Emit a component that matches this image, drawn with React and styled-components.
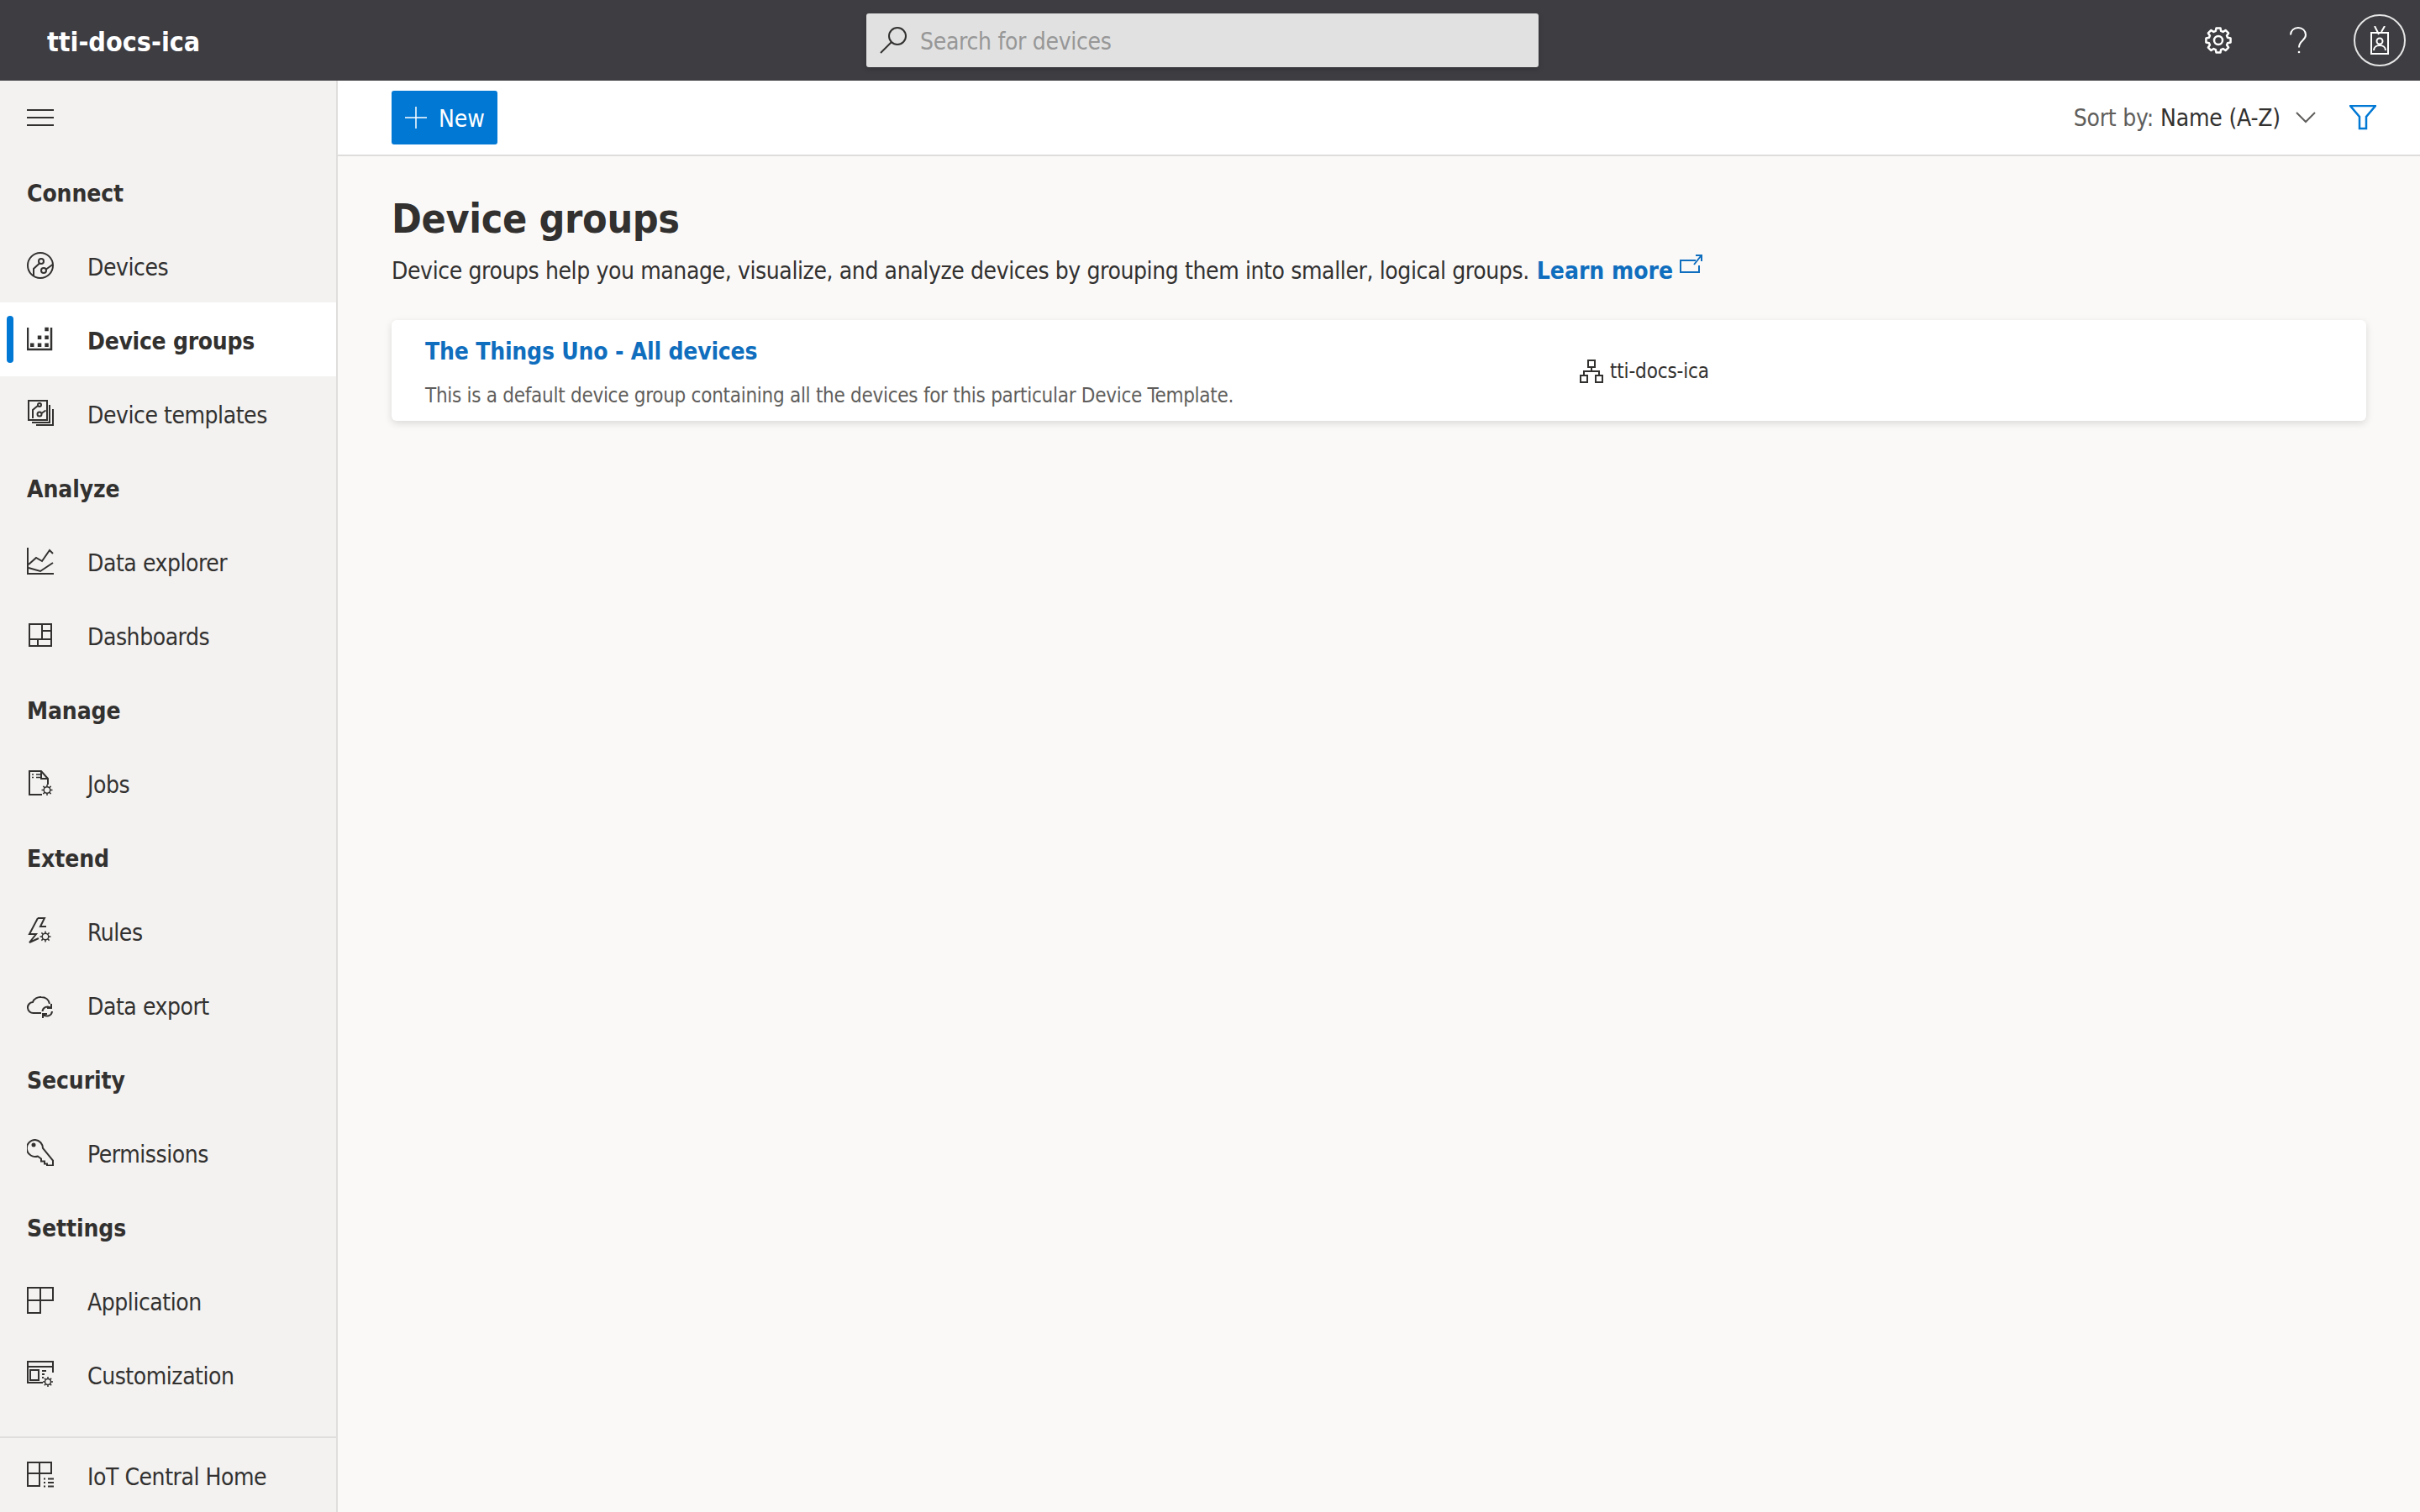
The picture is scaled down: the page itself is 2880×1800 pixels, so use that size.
import React from "react";
import styled, { createGlobalStyle } from "styled-components";

const Global = createGlobalStyle`
  html, body { margin: 0; padding: 0; background: #faf9f8; }
  * { box-sizing: border-box; }
  body { font-family: "DejaVu Sans", "Noto Sans", sans-serif; font-stretch: condensed; color: #323130; }
`;

const Page = styled.div`
  width: 2880px;
  height: 1800px;
  display: grid;
  grid-template-rows: 96px 1fr;
  overflow: hidden;
`;
const Header = styled.header`
  background: #3e3d42;
  display: grid;
  grid-template-columns: 1031px 800px 1fr;
  align-items: center;
`;
const Brand = styled.div`
  padding: 4px 0 0 56px;
  color: #fff;
  font-size: 32px;
  font-weight: 700;
`;
const Search = styled.div`
  height: 64px;
  background: #e1e1e1;
  border-radius: 3px;
  display: flex;
  align-items: center;
  padding-left: 16px;
  gap: 15px;
  font-size: 28px;
  letter-spacing: -0.3px;
  color: #979797;
  box-shadow: 0 2px 6px rgba(0,0,0,.2);
`;
const SearchText = styled.span`
  padding-top: 3px;
`;
const Tools = styled.div`
  display: flex;
  align-items: center;
  justify-content: flex-end;
  padding-right: 17px;
  color: #fff;
`;
const ToolIcon = styled.span`
  display: flex;
  margin-right: ${p => p.$mr}px;
`;
const Avatar = styled.span`
  width: 62px;
  height: 62px;
  border-radius: 50%;
  border: 2px solid #e6e6e6;
  display: flex;
  align-items: center;
  justify-content: center;
`;
const Body = styled.div`
  display: grid;
  grid-template-columns: 402px 1fr;
  min-height: 0;
`;
const Side = styled.nav`
  background: #f3f2f1;
  border-right: 2px solid #dfdedd;
  display: flex;
  flex-direction: column;
`;
const SideList = styled.div`
  flex: 1;
`;
const Row = styled.div`
  height: 88px;
  display: flex;
  align-items: center;
  padding-left: 32px;
  position: relative;
  font-size: 28px;
  letter-spacing: ${p => (p.$active ? "-0.28px" : "-0.45px")};
  background: ${p => (p.$active ? "#fff" : "transparent")};
  font-weight: ${p => (p.$active ? 700 : 400)};
`;
const RowLabel = styled.span`
  padding-top: 4px;
`;
const ActiveBar = styled.span`
  position: absolute;
  left: 8px;
  top: 16px;
  width: 8px;
  height: 56px;
  border-radius: 4px;
  background: #0078d4;
`;
const Heading = styled.div`
  height: 88px;
  display: flex;
  align-items: center;
  padding: 4px 0 0 32px;
  font-size: 28px;
  font-weight: 700;
  letter-spacing: -0.1px;
`;
const RowIcon = styled.span`
  width: 40px;
  margin-right: 32px;
  display: flex;
  color: #323130;
`;
const SideFoot = styled.div`
  border-top: 2px solid #dfdedd;
`;
const Main = styled.main`
  display: flex;
  flex-direction: column;
  min-width: 0;
`;
const Toolbar = styled.div`
  height: 90px;
  flex: none;
  background: #fff;
  border-bottom: 2px solid #dedddc;
  display: flex;
  align-items: center;
  padding: 0 52px 0 64px;
`;
const NewButton = styled.button`
  width: 126px;
  height: 64px;
  background: #0078d4;
  border: 0;
  border-radius: 3px;
  color: #fff;
  font: inherit;
  font-size: 28px;
  display: flex;
  align-items: center;
  padding: 0 0 0 16px;
  gap: 14px;
`;
const NewLabel = styled.span`
  padding-top: 3px;
`;
const Sort = styled.div`
  margin-left: auto;
  display: flex;
  align-items: center;
  font-size: 28px;
  letter-spacing: -0.2px;
  color: #323130;
`;
const SortLabel = styled.span`
  color: #605e5c;
  margin-right: 8px;
`;
const Chevron = styled.span`
  display: flex;
  margin: 0 40px 0 18px;
`;
const Content = styled.section`
  padding: 42px 64px 0 64px;
`;
const Title = styled.h1`
  margin: 0;
  font-size: 48px;
  line-height: 64px;
  font-weight: 700;
  letter-spacing: -0.35px;
`;
const Lead = styled.p`
  margin: 11px 0 0;
  font-size: 28px;
  line-height: 40px;
  letter-spacing: -0.39px;
  display: flex;
  align-items: center;
`;
const LearnMore = styled.a`
  color: #106ebe;
  font-weight: 700;
  letter-spacing: 0;
  margin-left: 9px;
  display: inline-flex;
  align-items: flex-start;
  gap: 7px;
`;
const Card = styled.article`
  margin-top: 38px;
  height: 120px;
  background: #fff;
  border-radius: 6px;
  box-shadow: 0 3px 10px rgba(0,0,0,.13);
  display: grid;
  grid-template-columns: 1374px 1fr;
  align-items: center;
  padding-left: 40px;
`;
const CardText = styled.div`
  display: flex;
  flex-direction: column;
  gap: 18px;
  padding-top: 6px;
`;
const CardTitle = styled.div`
  color: #106ebe;
  font-size: 28px;
  line-height: 36px;
  font-weight: 700;
  letter-spacing: -0.2px;
`;
const CardDesc = styled.div`
  color: #605e5c;
  font-size: 24px;
  line-height: 32px;
  letter-spacing: -0.28px;
`;
const Org = styled.div`
  display: flex;
  align-items: center;
  gap: 8px;
  padding-top: 2px;
  font-size: 24px;
  letter-spacing: -0.15px;
  color: #323130;
`;

const Svg = ({ children }) => (
  <svg width="32" height="32" viewBox="0 0 32 32" fill="none" stroke="currentColor" strokeWidth="2" aria-hidden="true">
    {children}
  </svg>
);

const gearPath = (cx, cy, r) => {
  const n = [];
  for (let i = 0; i < 8; i++) {
    const a = (i * Math.PI) / 4;
    n.push(`M${(cx + Math.cos(a) * r * 0.6).toFixed(1)} ${(cy + Math.sin(a) * r * 0.6).toFixed(1)}L${(cx + Math.cos(a) * r).toFixed(1)} ${(cy + Math.sin(a) * r).toFixed(1)}`);
  }
  return n.join("");
};
const MiniGear = ({ cx, cy, r = 5.5 }) => (
  <g strokeWidth="1.5">
    <circle cx={cx} cy={cy} r={r * 0.58} />
    <path d={gearPath(cx, cy, r)} />
  </g>
);

const bigGear = (() => {
  const cx = 16, cy = 16;
  const pts = [];
  for (let i = 0; i < 8; i++) {
    const a = -Math.PI / 2 + (i * Math.PI) / 4;
    const step = 0.17;
    const wide = 0.24;
    [[11.5, -wide - 0.04], [14.8, -step], [14.8, step], [11.5, wide + 0.04]].forEach(([r, d]) => {
      pts.push(`${(cx + Math.cos(a + d) * r).toFixed(2)} ${(cy + Math.sin(a + d) * r).toFixed(2)}`);
    });
  }
  return `M${pts.join("L")}Z`;
})();

const icons = {
  devices: (
    <Svg>
      <circle cx="16" cy="16" r="15" />
      <circle cx="17" cy="11" r="3" />
      <circle cx="20" cy="22" r="3" />
      <path d="M15 13.500L8 20v8M23 20.500L30.500 15" />
    </Svg>
  ),
  groups: (
    <Svg>
      <path d="M1 2v26h28V2" strokeWidth="2.500" />
      <path d="M4 22.700h4.500M12.800 22.700h4.500M21.300 22.700h4.500M12.800 13.700h4.500M21.300 13.700h4.500M21.300 4h4.500" strokeWidth="4.500" />
    </Svg>
  ),
  templates: (
    <Svg>
      <rect x="2" y="1" width="22" height="23" />
      <path d="M27 6v21H6M31 11v19H11" />
      <circle cx="15" cy="6" r="2" />
      <circle cx="15" cy="17" r="2.500" />
      <path d="M13 7L7 12v10M17.500 16l5-3.500" />
    </Svg>
  ),
  explorer: (
    <Svg>
      <path d="M1 0v31h31" />
      <path d="M2 20l9-8 7 4 9-13 4 4M2 24l14 4 15-10" />
    </Svg>
  ),
  dashboards: (
    <Svg>
      <rect x="3" y="3" width="26" height="26" />
      <path d="M3 21h26M18 3v18M18 11h11M13 21v8" />
    </Svg>
  ),
  jobs: (
    <Svg>
      <path d="M18 30H3V2h14l8 9v7M17 2v9h8" />
      <path d="M6 6h2M6 9.500h2M11 6h7M11 9.500h7" strokeWidth="1.500" />
      <MiniGear cx={24} cy={24.500} r={6.500} />
    </Svg>
  ),
  rules: (
    <Svg>
      <path d="M13 1h8l-5 10h7M13 1L3 20h8L3 30l11-5" />
      <MiniGear cx={22} cy={23} r={6.500} />
    </Svg>
  ),
  exportIcon: (
    <Svg>
      <path d="M17 26H8a6.500 6.500 0 0 1-1-13C8 9 13 6.500 17 7c5 0 9 3 10 8" />
      <path d="M18.500 24a6 6 0 0 1 10-4M30 24a6 6 0 0 1-10 4M29 15v5h-5M19 32v-5h5" />
    </Svg>
  ),
  permissions: (
    <Svg>
      <path d="M10 1a10 10 0 1 0 3 19.500l4 3v3h4v3h3v2h7v-6L19 11A10 10 0 0 0 10 1z" />
      <circle cx="8" cy="7" r="1.500" fill="currentColor" />
    </Svg>
  ),
  application: (
    <Svg>
      <path d="M1 1h30v15H16v15H1zM1 16h15M16 1v15" />
    </Svg>
  ),
  custom: (
    <Svg>
      <path d="M19 26H1V1h30v13M1 7h30" />
      <rect x="4" y="11" width="10" height="12" />
      <path d="M18 12h5M18 16h3M18 20h2" />
      <MiniGear cx={25} cy={25} r={6} />
    </Svg>
  ),
  home: (
    <Svg>
      <path d="M1 1h28v13H1zM1 14v15h14V1M15 14v15" />
      <path d="M20 20.500h2M25 20.500h7M20 25h2M25 25h7M20 29.500h2M25 29.500h7" />
    </Svg>
  ),
};

const sections = [
  { title: "Connect", items: [["Devices", "devices"], ["Device groups", "groups", true], ["Device templates", "templates"]] },
  { title: "Analyze", items: [["Data explorer", "explorer"], ["Dashboards", "dashboards"]] },
  { title: "Manage", items: [["Jobs", "jobs"]] },
  { title: "Extend", items: [["Rules", "rules"], ["Data export", "exportIcon"]] },
  { title: "Security", items: [["Permissions", "permissions"]] },
  { title: "Settings", items: [["Application", "application"], ["Customization", "custom"]] },
];

const NavRow = ({ label, icon, active }) => (
  <Row $active={active}>
    {active && <ActiveBar />}
    <RowIcon>{icons[icon]}</RowIcon>
    <RowLabel>{label}</RowLabel>
  </Row>
);

export default function App() {
  return (
    <Page>
      <Global />
      <Header>
        <Brand>tti-docs-ica</Brand>
        <Search>
          <svg width="33" height="32" viewBox="0 0 33 32" fill="none" stroke="#323130" strokeWidth="2" aria-hidden="true">
            <circle cx="21" cy="11" r="10" />
            <path d="M14 18L1 31" />
          </svg>
          <SearchText>Search for devices</SearchText>
        </Search>
        <Tools>
          <ToolIcon $mr={69}>
            <svg width="32" height="32" viewBox="0 0 32 32" fill="none" stroke="currentColor" strokeWidth="2.500" strokeLinejoin="round" aria-hidden="true">
              <circle cx="16" cy="16" r="5" />
              <path d={bigGear} />
            </svg>
          </ToolIcon>
          <ToolIcon $mr={56}>
            <svg width="20" height="32" viewBox="0 0 20 32" fill="none" stroke="currentColor" strokeWidth="2" aria-hidden="true">
              <path d="M1 9.500C1 4.500 5 1 10 1s9 3.500 9 8.500c0 7-8 6.500-8 15" />
              <circle cx="11" cy="30" r="1.300" fill="currentColor" stroke="none" />
            </svg>
          </ToolIcon>
          <Avatar>
            <svg width="22" height="34" viewBox="0 0 22 34" fill="none" stroke="currentColor" strokeWidth="2" aria-hidden="true">
              <rect x="1" y="8" width="20" height="25" />
              <path d="M5 0l5 10M17 0l-4 7" />
              <circle cx="11" cy="18" r="3.500" />
              <path d="M4 29c0-8 14-8 14 0" />
            </svg>
          </Avatar>
        </Tools>
      </Header>
      <Body>
        <Side>
          <SideList>
            <Row>
              <RowIcon>
                <svg width="32" height="20" viewBox="0 0 32 20" fill="none" stroke="currentColor" strokeWidth="2" aria-hidden="true">
                  <path d="M0 1h32M0 10h32M0 19h32" />
                </svg>
              </RowIcon>
            </Row>
            {sections.map(s => (
              <React.Fragment key={s.title}>
                <Heading>{s.title}</Heading>
                {s.items.map(([label, icon, active]) => (
                  <NavRow key={label} label={label} icon={icon} active={active} />
                ))}
              </React.Fragment>
            ))}
          </SideList>
          <SideFoot>
            <NavRow label="IoT Central Home" icon="home" />
          </SideFoot>
        </Side>
        <Main>
          <Toolbar>
            <NewButton>
              <svg width="26" height="26" viewBox="0 0 26 26" stroke="#fff" strokeWidth="1.500" aria-hidden="true">
                <path d="M0 13h26M13 0v26" />
              </svg>
              <NewLabel>New</NewLabel>
            </NewButton>
            <Sort>
              <SortLabel>Sort by:</SortLabel>
              Name (A-Z)
              <Chevron>
                <svg width="24" height="14" viewBox="0 0 24 14" fill="none" stroke="#605e5c" strokeWidth="2" aria-hidden="true">
                  <path d="M1 1l11 11L23 1" />
                </svg>
              </Chevron>
              <svg width="32" height="30" viewBox="0 0 32 30" fill="none" stroke="#0078d4" strokeWidth="2.500" aria-hidden="true">
                <path d="M1 1h30L20 14v14h-8V14z" />
              </svg>
            </Sort>
          </Toolbar>
          <Content>
            <Title>Device groups</Title>
            <Lead>
              Device groups help you manage, visualize, and analyze devices by grouping them into smaller, logical groups.
              <LearnMore>
                Learn more
                <svg width="28" height="24" viewBox="0 0 28 24" fill="none" stroke="#106ebe" strokeWidth="2" aria-hidden="true">
                  <path d="M20 7H2v14h22V13M18 12L26 2M20 1h7v7" />
                </svg>
              </LearnMore>
            </Lead>
            <Card>
              <CardText>
                <CardTitle>The Things Uno - All devices</CardTitle>
                <CardDesc>This is a default device group containing all the devices for this particular Device Template.</CardDesc>
              </CardText>
              <Org>
                <svg width="28" height="28" viewBox="0 0 28 28" fill="none" stroke="#323130" strokeWidth="2" aria-hidden="true">
                  <rect x="10" y="1" width="8" height="8" />
                  <rect x="1" y="19" width="8" height="8" />
                  <rect x="19" y="19" width="8" height="8" />
                  <path d="M14 9v5M5 19v-5h18v5" />
                </svg>
                tti-docs-ica
              </Org>
            </Card>
          </Content>
        </Main>
      </Body>
    </Page>
  );
}
